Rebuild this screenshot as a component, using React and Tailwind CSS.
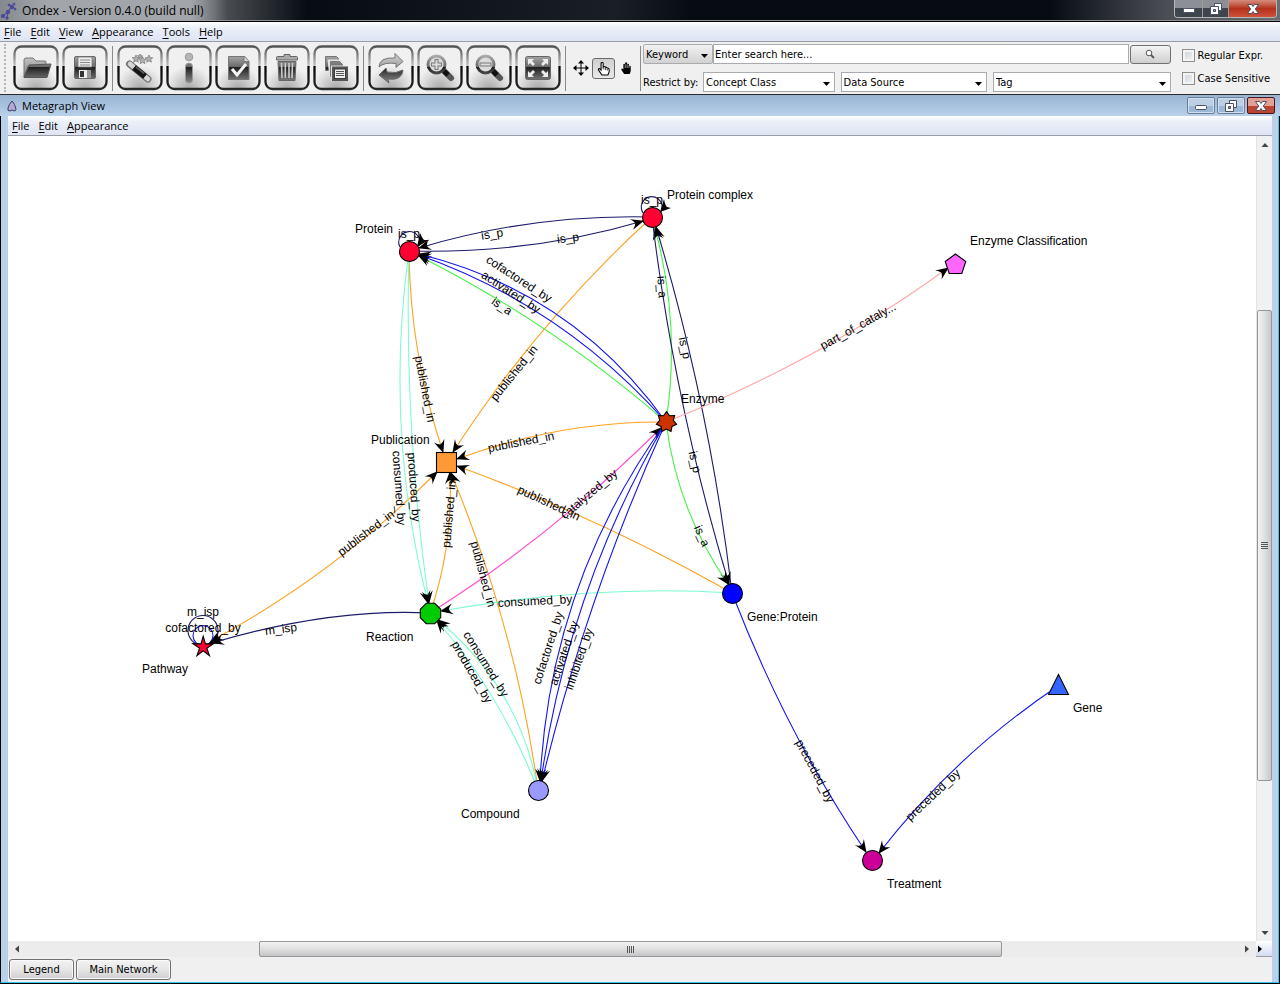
import React from "react";

const MENU_FONT = "font-['Open_Sans','Noto_Sans',sans-serif]";
const FORM_FONT = "font-['DejaVu_Sans_Condensed','DejaVu_Sans',sans-serif]";

/* ---------- graph data ---------- */

const COLORS = {
  navy: "#1c1c6c",
  blue: "#1414f0",
  green: "#45f345",
  orange: "#ffa21f",
  mint: "#7dfcd0",
  magenta: "#ff4fd0",
  pink: "#ffa8a8",
};

const EDGES = [
  ["navy", "M652 217Q532 214 419 248"],
  ["navy", "M409 251Q532 254 643 221"],
  ["orange", "M409 251Q410 354 443 452"],
  ["orange", "M652 217Q538 321 453 452"],
  ["orange", "M666 422Q560 421 457 459"],
  ["orange", "M732 593Q598 517 457 466"],
  ["orange", "M430 613Q453 548 450 472"],
  ["orange", "M538 790Q516 629 451 473"],
  ["orange", "M211 641Q335 574 437 472", true],
  ["navy", "M430 613Q330 608 212 643"],
  ["mint", "M409 251Q384 430 428 603"],
  ["mint", "M409 251Q404 430 429 603"],
  ["mint", "M732 593Q595 584 441 611"],
  ["mint", "M538 790Q520 688 438 620"],
  ["mint", "M538 790Q500 693 437 621"],
  ["magenta", "M430 613Q551 537 661 428"],
  ["green", "M666 422Q681 325 655 228"],
  ["navy", "M732 593Q710 407 656 227"],
  ["navy", "M652 217Q674 402 729 584"],
  ["green", "M666 422Q677 510 728 584"],
  ["green", "M666 422Q552 323 419 256"],
  ["blue", "M666 422Q563 306 419 255"],
  ["blue", "M666 422Q573 292 419 254"],
  ["blue", "M666 422Q550 583 540 781"],
  ["blue", "M666 422Q568 589 541 781"],
  ["blue", "M666 422Q587 595 542 781"],
  ["pink", "M666 422Q818 362 948 268"],
  ["blue", "M732 593Q786 733 866 852"],
  ["blue", "M1058 686Q955 755 879 853"],
];

const EDGE_LABELS = [
  ["is_p", 492, 234, -9],
  ["is_p", 568, 238, -7],
  ["is_p", 409, 234, 0],
  ["is_p", 652, 200, 0],
  ["cofactored_by", 519, 279, 33],
  ["activated_by", 511, 292, 33],
  ["is_a", 502, 306, 34],
  ["published_in", 425, 389, 79],
  ["published_in", 514, 373, -51],
  ["published_in", 521, 442, -11],
  ["published_in", 549, 503, 25],
  ["catalyzed_by", 589, 494, -40],
  ["published_in", 449, 514, -85],
  ["published_in", 483, 574, 75],
  ["published_in", 366, 533, -37],
  ["m_isp", 281, 629, -7],
  ["m_isp", 203, 612, 0],
  ["cofactored_by", 203, 628, 0],
  ["consumed_by", 399, 488, 86],
  ["produced_by", 414, 487, 86],
  ["consumed_by", 535, 601, -3],
  ["consumed_by", 486, 664, 58],
  ["produced_by", 472, 672, 60],
  ["cofactored_by", 548, 648, -72],
  ["activated_by", 564, 653, -71],
  ["inhibited_by", 579, 659, -71],
  ["is_a", 662, 287, 86],
  ["is_p", 685, 348, 78],
  ["is_p", 695, 462, 77],
  ["is_a", 702, 536, 66],
  ["part_of_cataly...", 858, 326, -29],
  ["preceded_by", 815, 771, 62],
  ["preceded_by", 933, 795, -43],
];

const NODE_LABELS = [
  ["Protein", 355, 233],
  ["Protein complex", 667, 199],
  ["Enzyme Classification", 970, 245],
  ["Enzyme", 681, 403],
  ["Publication", 371, 444],
  ["Reaction", 366, 641],
  ["Pathway", 142, 673],
  ["Gene:Protein", 747, 621],
  ["Compound", 461, 818],
  ["Gene", 1073, 712],
  ["Treatment", 887, 888],
];

function polygon(cx, cy, n, r, start) {
  return Array.from({ length: n }, (_, i) => {
    const a = ((start + (360 / n) * i) * Math.PI) / 180;
    return `${(cx + r * Math.cos(a)).toFixed(1)},${(cy + r * Math.sin(a)).toFixed(1)}`;
  }).join(" ");
}

function star(cx, cy, n, outer, inner) {
  return Array.from({ length: n * 2 }, (_, i) => {
    const r = i % 2 ? inner : outer;
    const a = ((-90 + (180 / n) * i) * Math.PI) / 180;
    return `${(cx + r * Math.cos(a)).toFixed(1)},${(cy + r * Math.sin(a)).toFixed(1)}`;
  }).join(" ");
}

function Graph() {
  return (
    <svg
      viewBox="8 136 1248 805"
      role="img"
      aria-label="Metagraph"
      className="block h-full w-full font-['Liberation_Sans',Arial,sans-serif] text-[12px]"
    >
      <defs>
        <marker id="arrow" markerUnits="userSpaceOnUse" markerWidth="16" markerHeight="12" refX="13" refY="6" orient="auto-start-reverse">
          <path d="M14 6L1 0.5Q4 3 5 6Q4 9 1 11.5Z" fill="#000" />
        </marker>
      </defs>
      <g fill="none" strokeWidth="1.1">
        {EDGES.map(([color, d, both], i) => (
          <path key={i} d={d} stroke={COLORS[color]} markerEnd="url(#arrow)" markerStart={both ? "url(#arrow)" : undefined} />
        ))}
        <path d="M400 247A10.5 10.5 0 1 1 419 246" stroke={COLORS.navy} />
        <path d="M643 213A10.5 10.5 0 1 1 661 212" stroke={COLORS.navy} />
        <circle cx="203" cy="630.500" r="15" stroke={COLORS.navy} />
        <circle cx="203" cy="635.500" r="10" stroke={COLORS.blue} />
      </g>
      <path d="M417 247L420 233Q422 238 424 240L429 240Z" />
      <path d="M660 212L664 199Q665 205 667 207L671 208Z" />
      <path d="M209 643L218 634Q218 640 222 644Z" />
      <g textAnchor="middle">
        {EDGE_LABELS.map(([text, x, y, angle], i) => (
          <text key={i} x={x} y={y + 4} transform={`rotate(${angle} ${x} ${y})`}>{text}</text>
        ))}
      </g>
      <g stroke="#000" strokeWidth="1.1">
        <circle cx="409.500" cy="251.500" r="10" fill="#ff0033" />
        <circle cx="652.500" cy="217.500" r="10" fill="#ff0033" />
        <circle cx="732.500" cy="593.500" r="10" fill="#0000ff" />
        <circle cx="538.500" cy="790.500" r="10" fill="#9999ff" />
        <circle cx="872.500" cy="860.500" r="10" fill="#cc0099" />
        <rect x="436.500" y="452.500" width="20" height="20" fill="#ff9933" />
        <polygon points={polygon(955.5, 264.8, 5, 10.8, -90)} fill="#ff66ff" />
        <polygon points={polygon(430.5, 613.5, 8, 11, 22.5)} fill="#00cc00" />
        <polygon points={star(203.2, 647, 5, 10.8, 3.8)} fill="#ff0033" />
        <polygon points={star(666.5, 422, 7, 10.4, 7)} fill="#cc3300" />
        <polygon points="1058.500,674.500 1068.500,694.500 1048.500,694.500" fill="#3366ff" />
      </g>
      {NODE_LABELS.map(([text, x, y]) => (
        <text key={text} x={x} y={y}>{text}</text>
      ))}
    </svg>
  );
}

/* ---------- toolbar artwork ---------- */

function SharedDefs() {
  return (
    <svg className="absolute h-0 w-0" aria-hidden="true">
      <defs>
        <linearGradient id="frame" gradientUnits="userSpaceOnUse" x1="0" y1="0" x2="0" y2="46">
          <stop offset="0" stopColor="#4c4c4c" />
          <stop offset="0.46" stopColor="#c4c4c4" />
          <stop offset="0.46" stopColor="#050505" />
          <stop offset="1" stopColor="#2c2c2c" />
        </linearGradient>
        <radialGradient id="face" cx="0.5" cy="1" r="0.55">
          <stop offset="0" stopColor="#a8a8a8" />
          <stop offset="1" stopColor="#f0f0f0" />
        </radialGradient>
        <linearGradient id="glyph" gradientUnits="userSpaceOnUse" x1="0" y1="9" x2="0" y2="37">
          <stop offset="0" stopColor="#b4b4b4" />
          <stop offset="0.45" stopColor="#6a6a6a" />
          <stop offset="0.46" stopColor="#1c1c1c" />
          <stop offset="1" stopColor="#858585" />
        </linearGradient>
        <linearGradient id="soft" gradientUnits="userSpaceOnUse" x1="0" y1="9" x2="0" y2="37">
          <stop offset="0" stopColor="#d0d0d0" />
          <stop offset="1" stopColor="#6c6c6c" />
        </linearGradient>
      </defs>
    </svg>
  );
}

const ICONS = {
  open: (
    <>
      <path d="M11 32V15q0-2 2-2h7l3 3h9q1 0 1 1v4H15z" fill="url(#soft)" stroke="#777" />
      <path d="M16 20l22-1-4 13.500H11z" fill="url(#glyph)" stroke="#555" />
    </>
  ),
  save: (
    <>
      <rect x="12.500" y="11.500" width="21" height="22" rx="1.500" fill="url(#glyph)" stroke="#666" />
      <path d="M16 12h14v10H16z" fill="#ededed" stroke="#777" strokeWidth="0.800" />
      <path d="M18 15h10M18 17.500h10M18 20h10" stroke="#888" />
      <path d="M17 25h12v8H17z" fill="#eee" />
      <path d="M18 26h4v6h-4z" fill="#333" />
      <path d="M25 25h4v8h-4z" fill="#999" />
    </>
  ),
  wand: (
    <>
      <path d="M12.500 19L31 34" stroke="#777" strokeWidth="7" strokeLinecap="round" />
      <path d="M13 19L31 34" stroke="#d6d6d6" strokeWidth="4.500" strokeLinecap="round" />
      <path d="M17 22.500L28 31.500" stroke="#151515" strokeWidth="6" />
      <path d="M19 22l8 6.500" stroke="#666" strokeWidth="1.500" />
      <g fill="#b0b0b0" stroke="#777" strokeWidth="0.700">
        <polygon points={star(19, 14, 5, 4, 1.8)} />
        <polygon points={star(25.5, 15.5, 5, 4, 1.8)} />
        <polygon points={star(32, 14, 5, 4, 1.8)} />
        <polygon points={star(23, 11.5, 5, 2.5, 1)} />
      </g>
    </>
  ),
  info: (
    <>
      <circle cx="23" cy="12" r="3.800" fill="#b6b6b6" stroke="#999" />
      <rect x="19.500" y="18" width="7" height="20" rx="3.500" fill="url(#glyph)" stroke="#999" />
    </>
  ),
  check: (
    <>
      <path d="M13.500 11.500H30l4 5V34.500H13.500z" fill="url(#glyph)" stroke="#777" />
      <path d="M29 11.500v5h5" fill="#ddd" stroke="#777" />
      <path d="M17 24l5 6 9-11" fill="none" stroke="#f4f4f4" strokeWidth="3" />
    </>
  ),
  trash: (
    <>
      <path d="M12.500 15v-2.500q0-1 1-1H20V9.500h6v2h6.500q1 0 1 1V15z" fill="#aaa" stroke="#666" />
      <path d="M14 16.500h18l-1 19H15z" fill="url(#glyph)" stroke="#666" />
      <path d="M17.500 18l.5 15M21.300 18v15M25 18v15M28.500 18l-.5 15" stroke="#ccc" strokeWidth="1.600" />
    </>
  ),
  copy: (
    <>
      <path d="M12.500 11.500h11l2 2v12h-13z" fill="url(#glyph)" stroke="#777" />
      <path d="M14.500 14.500h13l3 3v15h-14z" fill="#e4e4e4" />
      <path d="M17.500 16.500h9l3 3v12h-12z" fill="url(#glyph)" stroke="#777" />
      <path d="M18 20.500h17v15.500H18z" fill="#e4e4e4" />
      <path d="M20 22.500h14v12.500H20z" fill="#3a3a3a" stroke="#555" strokeWidth="2" />
      <path d="M22 24.500h10v8.500H22z" fill="#eee" />
      <path d="M23 26.500h8M23 28.500h8M23 30.500h8" stroke="#555" />
    </>
  ),
  refresh: (
    <>
      <path d="M11 22q0-10 16-9V8.500l8 8-7 6v-4q-12-1.500-17 3.500z" fill="url(#soft)" stroke="#777" />
      <path d="M35 25q-1 11-15 9l1 4-10-8 7-7 1 4q9 2 16-2z" fill="url(#glyph)" stroke="#666" />
    </>
  ),
  zoomIn: (
    <>
      <path d="M27 26l7 7" stroke="#555" strokeWidth="6" strokeLinecap="round" />
      <path d="M27 26l4 4" stroke="#111" strokeWidth="5" />
      <circle cx="19.500" cy="19.500" r="8.500" fill="#dcdcdc" stroke="url(#glyph)" strokeWidth="3" />
      <path d="M19.500 14v11M14 19.500h11" stroke="#777" strokeWidth="4" />
      <path d="M19.500 15v9M15 19.500h9" stroke="#ddd" strokeWidth="2" />
    </>
  ),
  zoomOut: (
    <>
      <path d="M27 26l7 7" stroke="#555" strokeWidth="6" strokeLinecap="round" />
      <path d="M27 26l4 4" stroke="#111" strokeWidth="5" />
      <circle cx="19.500" cy="19.500" r="8.500" fill="#dcdcdc" stroke="url(#glyph)" strokeWidth="3" />
      <path d="M13.500 19.500h12" stroke="#777" strokeWidth="4" />
      <path d="M14.500 19.500h10" stroke="#ddd" strokeWidth="2" />
    </>
  ),
  fit: (
    <>
      <rect x="10.500" y="11.500" width="25" height="23" rx="2" fill="url(#glyph)" stroke="#666" />
      <path d="M13 14h6l-2 2 3 3-2 2-3-3-2 2zM33 14h-6l2 2-3 3 2 2 3-3 2 2zM13 32h6l-2-2 3-3-2-2-3 3-2-2zM33 32h-6l2-2-3-3 2-2 3 3 2-2z" fill="#ededed" />
    </>
  ),
};

function ToolButton({ icon, label }) {
  return (
    <button type="button" aria-label={label} className="block">
      <svg width="46" height="46" viewBox="0 0 46 46" fill="none" className="block">
        <rect x="1.500" y="1.500" width="43" height="42.500" rx="7" fill="url(#face)" stroke="url(#frame)" strokeWidth="2.300" />
        {ICONS[icon]}
      </svg>
    </button>
  );
}

const HAND = "M6 17L2 11q-1-2 1-2l2 2V3q0-1.500 1.300-1.500T7.600 3v4q2-1 2.600.5 2-.5 2.400 1 2.400 0 2.400 2V13l-1.500 4z";
const PALM = "M5.500 17L2 11.500q-1-2 1-2l1.500 1.500V4q1.200-1.500 2.400 0V2q1.300-1.500 2.600 0v2q1.300-1.200 2.500 0v2.500q1.200-1 2.300.3V13l-1.300 4z";

function Separator() {
  return <div className="h-[45px] w-px bg-[#8a8a8a]" />;
}

function MenuBar({ items, className }) {
  return (
    <nav className={`flex h-5 items-center gap-[9px] border-b border-[#9a9da6] bg-linear-to-b from-white from-0% via-[#eaeff8] via-30% to-[#dfe4f4] ${MENU_FONT} text-[11px] leading-none text-black ${className}`}>
      {items.map((item) => (
        <button key={item} type="button">
          <span className="underline underline-offset-2">{item[0]}</span>
          {item.slice(1)}
        </button>
      ))}
    </nav>
  );
}

function Dropdown({ label, options, wrapper, className }) {
  return (
    <div className={`relative ${wrapper}`}>
      <select aria-label={label} className={`h-5 w-full appearance-none border border-[#a9abb0] pl-[2px] text-black ${className}`}>
        {options.map((o) => (
          <option key={o}>{o}</option>
        ))}
      </select>
      <svg width="7" height="4" viewBox="0 0 7 4" className="pointer-events-none absolute top-[10px] right-[5px]" aria-hidden="true">
        <path d="M0 0h7L3.500 4z" />
      </svg>
    </div>
  );
}

function Check({ label }) {
  return (
    <label className="flex items-center gap-[3px] whitespace-nowrap">
      <input type="checkbox" className="h-[13px] w-[13px] appearance-none border border-[#8e8f8f] bg-linear-to-br from-[#cbcfd5] to-[#f6f6f6] shadow-[inset_0_0_0_2px_#f4f4f4] checked:bg-[#4b6a9b]" />
      {label}
    </label>
  );
}

function WindowGlyph({ kind }) {
  return (
    <svg width="14" height="12" viewBox="0 0 14 12" fill="#fff" stroke="#4b5064" strokeWidth="1" aria-hidden="true">
      {kind === "min" && <rect x="1.500" y="5.500" width="11" height="4" rx="1" />}
      {kind === "restore" && (
        <>
          <path d="M5.500 0.500h7v7h-7z" />
          <path d="M1.500 3.500h8v8h-8z" />
          <path d="M4.500 6.500h2v2h-2z" fill="#8a94a8" />
        </>
      )}
      {kind === "close" && <path d="M1.500 1.500h4L7 3.500l1.500-2h4L9.300 6l3.200 4.500h-4L7 8.500l-1.500 2h-4L4.700 6z" />}
    </svg>
  );
}

function Arrow({ dir, dark }) {
  const paths = {
    up: "M4 2L7.500 6H0.500z",
    down: "M4 6L0.500 2h7z",
    left: "M2 4L6 0.500v7z",
    right: "M6 4L2 0.500v7z",
  };
  return (
    <svg width="8" height="8" viewBox="0 0 8 8" fill={dark ? "#000" : "#444"} aria-hidden="true">
      <path d={paths[dir]} />
    </svg>
  );
}

const tabClass =
  "h-[21px] rounded-[3px] border border-[#707070] bg-linear-to-b from-[#f3f3f3] from-0% via-[#e6e6e6] via-50% to-[#cfcfcf] shadow-[inset_0_0_0_1px_#fafafa]";

const frameButton =
  "flex h-[17px] w-7 items-center justify-center rounded-[2px] border border-[#6b7f9c] bg-linear-to-b from-[#bdd0e6] from-50% to-[#9db8d6] to-50% shadow-[inset_0_0_0_1px_#cfdeee]";

export default function App() {
  return (
    <div className={`flex min-h-screen flex-col bg-[#f0f0f0] ${FORM_FONT} text-[11px] leading-none text-black`}>
      <SharedDefs />

      <header className="flex h-[22px] items-start justify-between border-b border-black bg-[linear-gradient(to_right,#85888c_0%,#85888c_12%,#070c12_24%,#1a1e25_48%,#070c12_54%,#070c12_82%,#4a4e54_91%,#6a6d72_100%)] shadow-[inset_0_-1px_0_#8d8f93]">
        <div className={`flex h-[21px] items-center gap-1 bg-[linear-gradient(to_right,transparent_0%,#a2a5a9_20%,#a2a5a9_84%,transparent_100%)] pr-6 ${MENU_FONT} text-[12px]`}>
          <svg width="18" height="18" viewBox="0 0 18 18" fill="#4d4a9c" stroke="#4d4a9c" aria-hidden="true">
            <path d="M3 14l5-4 4-6M8 10l-1 5M12 4l-3-1M12 4l3 3M3 14H1" strokeWidth="1" />
            <circle cx="3" cy="14" r="1.700" /><circle cx="7" cy="16" r="1.200" /><circle cx="8" cy="10" r="1.800" />
            <circle cx="12" cy="5" r="1.800" /><circle cx="9" cy="3" r="1" /><circle cx="15" cy="7" r="1" /><circle cx="14" cy="2" r="1" />
          </svg>
          <h1>Ondex - Version 0.4.0 (build null)</h1>
        </div>
        <div className="mr-[3px] flex h-[18px] overflow-hidden rounded-b-[4px] border border-t-0 border-[#b4b6ba]">
          <button type="button" aria-label="Minimize" className="flex w-7 items-center justify-center border-r border-[#9a9ca0] bg-linear-to-b from-[#8c9096] from-50% to-[#3f454c] to-50%"><WindowGlyph kind="min" /></button>
          <button type="button" aria-label="Restore" className="flex w-[26px] items-center justify-center border-r border-[#9a9ca0] bg-linear-to-b from-[#8c9096] from-50% to-[#3f454c] to-50%"><WindowGlyph kind="restore" /></button>
          <button type="button" aria-label="Close" className="flex w-[47px] items-center justify-center bg-linear-to-b from-[#d58b7c] from-0% via-[#b5301a] via-50% to-[#d0513a]"><WindowGlyph kind="close" /></button>
        </div>
      </header>

      <MenuBar items={["File", "Edit", "View", "Appearance", "Tools", "Help"]} className="pl-1" />

      <div className="flex h-[53px] items-center border-b border-[#2b2b2b] bg-[#f0f0f0] pr-[10px]">
        <div className="mr-[7px] ml-1 h-12 w-px border-l-2 border-dotted border-[#b5b5b5]" />
        <div className="flex items-center gap-[3px]">
          <ToolButton icon="open" label="Open" />
          <ToolButton icon="save" label="Save" />
        </div>
        <div className="mx-1"><Separator /></div>
        <div className="flex items-center gap-[3px]">
          <ToolButton icon="wand" label="Wizard" />
          <ToolButton icon="info" label="Information" />
          <ToolButton icon="check" label="Validate" />
          <ToolButton icon="trash" label="Delete" />
          <ToolButton icon="copy" label="Copy" />
        </div>
        <div className="mx-1"><Separator /></div>
        <div className="flex items-center gap-[3px]">
          <ToolButton icon="refresh" label="Refresh" />
          <ToolButton icon="zoomIn" label="Zoom in" />
          <ToolButton icon="zoomOut" label="Zoom out" />
          <ToolButton icon="fit" label="Fit to window" />
        </div>
        <div className="mx-1"><Separator /></div>
        <div className="flex items-center">
          <button type="button" aria-label="Move" className="flex w-[22px] justify-center">
            <svg width="16" height="16" viewBox="0 0 16 16"><path d="M8 0l3 3.500H8.500V7.500h4V5L16 8l-3.500 3V8.500h-4v4H11L8 16l-3-3.500h2.500v-4h-4V11L0 8l3.500-3v2.500h4v-4H5z" /></svg>
          </button>
          <button type="button" aria-label="Pan" aria-pressed="true" className="flex h-[21px] w-[23px] items-center justify-center rounded-[3px] border border-[#6b6b6b] bg-linear-to-b from-[#cfcfcf] to-[#e9e9e9]">
            <svg width="13" height="15" viewBox="0 0 16 18"><path d={HAND} fill="#fff" stroke="#000" strokeWidth="1.300" /><path d="M7.600 7v3M10.200 8v3M12.600 9v2.500" stroke="#000" /></svg>
          </button>
          <button type="button" aria-label="Pick" className="flex w-[22px] justify-center">
            <svg width="12" height="14" viewBox="0 0 16 18"><path d={PALM} /><path d="M7 4v5M9.500 4v5M12 5v4" stroke="#ddd" strokeWidth="0.900" /></svg>
          </button>
        </div>
        <div className="mr-[2px] ml-[3px]"><Separator /></div>

        <form className="flex min-w-0 flex-1 flex-col gap-2" onSubmit={(e) => e.preventDefault()}>
          <div className="flex items-center">
            <Dropdown label="Search field" options={["Keyword"]} wrapper="w-[70px] shrink-0" className="rounded-[2px] bg-linear-to-b from-[#f2f2f2] to-[#d2d2d2]" />
            <input type="text" aria-label="Search" defaultValue="Enter search here..." className="h-5 min-w-0 flex-1 border border-[#a9abb0] bg-white px-px text-black" />
            <button type="submit" aria-label="Search" className="ml-px flex h-[19px] w-[41px] items-center justify-center rounded-[3px] border border-[#707070] bg-linear-to-b from-[#f4f4f4] to-[#cfcfcf]">
              <svg width="10" height="10" viewBox="0 0 10 10" fill="#fff" stroke="#555"><circle cx="4" cy="4" r="2.800" /><path d="M6 6l3 3" strokeWidth="1.800" /></svg>
            </button>
          </div>
          <div className="flex items-center">
            <span className="w-[60px] shrink-0 whitespace-nowrap">Restrict by:</span>
            <Dropdown label="Concept class" options={["Concept Class"]} wrapper="flex-[132]" className="bg-white" />
            <Dropdown label="Data source" options={["Data Source"]} wrapper="ml-[6px] flex-[147]" className="bg-white" />
            <Dropdown label="Tag" options={["Tag"]} wrapper="ml-[6px] flex-[178]" className="bg-white" />
          </div>
        </form>
        <div className="ml-[11px] flex flex-col gap-[10px] pb-[2px]">
          <Check label="Regular Expr." />
          <Check label="Case Sensitive" />
        </div>
      </div>

      <main className="flex flex-1 flex-col border-b border-black bg-[#b9d1ea]">
        <div className="flex h-[21px] shrink-0 items-center justify-between bg-linear-to-b from-[#98b4d2] to-[#b9d1ea] pr-[5px] pl-[6px]">
          <div className={`flex items-center gap-1 ${MENU_FONT} text-[11px]`}>
            <svg width="12" height="12" viewBox="0 0 12 12" aria-hidden="true"><path d="M6 1q3 3 4 8 0 2-2 2l-2-1-2 1q-3 0-2-3 1-4 4-7z" fill="#b3a9d6" stroke="#3d3a66" /></svg>
            <h2>Metagraph View</h2>
          </div>
          <div className="flex gap-[2px]">
            <button type="button" aria-label="Minimize view" className={frameButton}><WindowGlyph kind="min" /></button>
            <button type="button" aria-label="Restore view" className={frameButton}><WindowGlyph kind="restore" /></button>
            <button type="button" aria-label="Close view" className="flex h-[17px] w-7 items-center justify-center rounded-[2px] border border-[#4b1620] bg-linear-to-b from-[#e3a195] from-50% to-[#bd4530] to-50%"><WindowGlyph kind="close" /></button>
          </div>
        </div>

        <div className="flex flex-1 flex-col border-r border-black">
          <div className="flex flex-1 flex-col border-r border-b border-l border-r-[#35c5e8] border-b-[#35c5e8] border-l-black pr-[6px] pl-[7px]">
            <MenuBar items={["File", "Edit", "Appearance"]} className="pl-1" />
            <div className="grid flex-1 grid-cols-[minmax(0,1fr)_16px] grid-rows-[minmax(0,1fr)_16px] bg-[#f0f0f0]">
              <div className="min-h-0 bg-white"><Graph /></div>
              <div className="flex flex-col items-center border-l border-[#e3e3e3] bg-[#f1f1f1]">
                <button type="button" aria-label="Scroll up" className="flex h-[17px] items-center"><Arrow dir="up" /></button>
                <div className="flex-[157]" />
                <div className="flex w-full flex-[471] flex-col items-center justify-center gap-px rounded-[2px] border border-[#979797] bg-linear-to-r from-[#f2f2f2] from-0% via-[#e0e0e0] via-50% to-[#c8c8cb]">
                  <i className="h-px w-[7px] bg-[#555]" /><i className="h-px w-[7px] bg-[#555]" /><i className="h-px w-[7px] bg-[#555]" /><i className="h-px w-[7px] bg-[#555]" />
                </div>
                <div className="flex-[143]" />
                <button type="button" aria-label="Scroll down" className="flex h-[17px] items-center"><Arrow dir="down" /></button>
              </div>
              <div className="flex items-center bg-[#ececec]">
                <button type="button" aria-label="Scroll left" className="flex w-[17px] justify-center"><Arrow dir="left" /></button>
                <div className="flex-[234]" />
                <div className="flex h-4 flex-[743] items-center justify-center gap-px rounded-[2px] border border-[#979797] bg-linear-to-b from-[#f2f2f2] from-0% via-[#e0e0e0] via-50% to-[#c4c4c8]">
                  <i className="h-[7px] w-px bg-[#555]" /><i className="h-[7px] w-px bg-[#555]" /><i className="h-[7px] w-px bg-[#555]" /><i className="h-[7px] w-px bg-[#555]" />
                </div>
                <div className="flex-[236]" />
                <button type="button" aria-label="Scroll right" className="flex w-[18px] justify-center"><Arrow dir="right" /></button>
              </div>
              <button type="button" aria-label="Satellite view" className="flex items-center border-b border-[#9a9da6] bg-linear-to-b from-white to-[#d5dcf0]"><Arrow dir="right" dark /></button>
            </div>
            <div className="flex h-[25px] items-center gap-[2px] bg-[#f0f0f0] pl-px">
              <button type="button" className={`w-[65px] ${tabClass}`}>Legend</button>
              <button type="button" className={`w-[95px] ${tabClass}`}>Main Network</button>
            </div>
          </div>
        </div>
      </main>
    </div>
  );
}
